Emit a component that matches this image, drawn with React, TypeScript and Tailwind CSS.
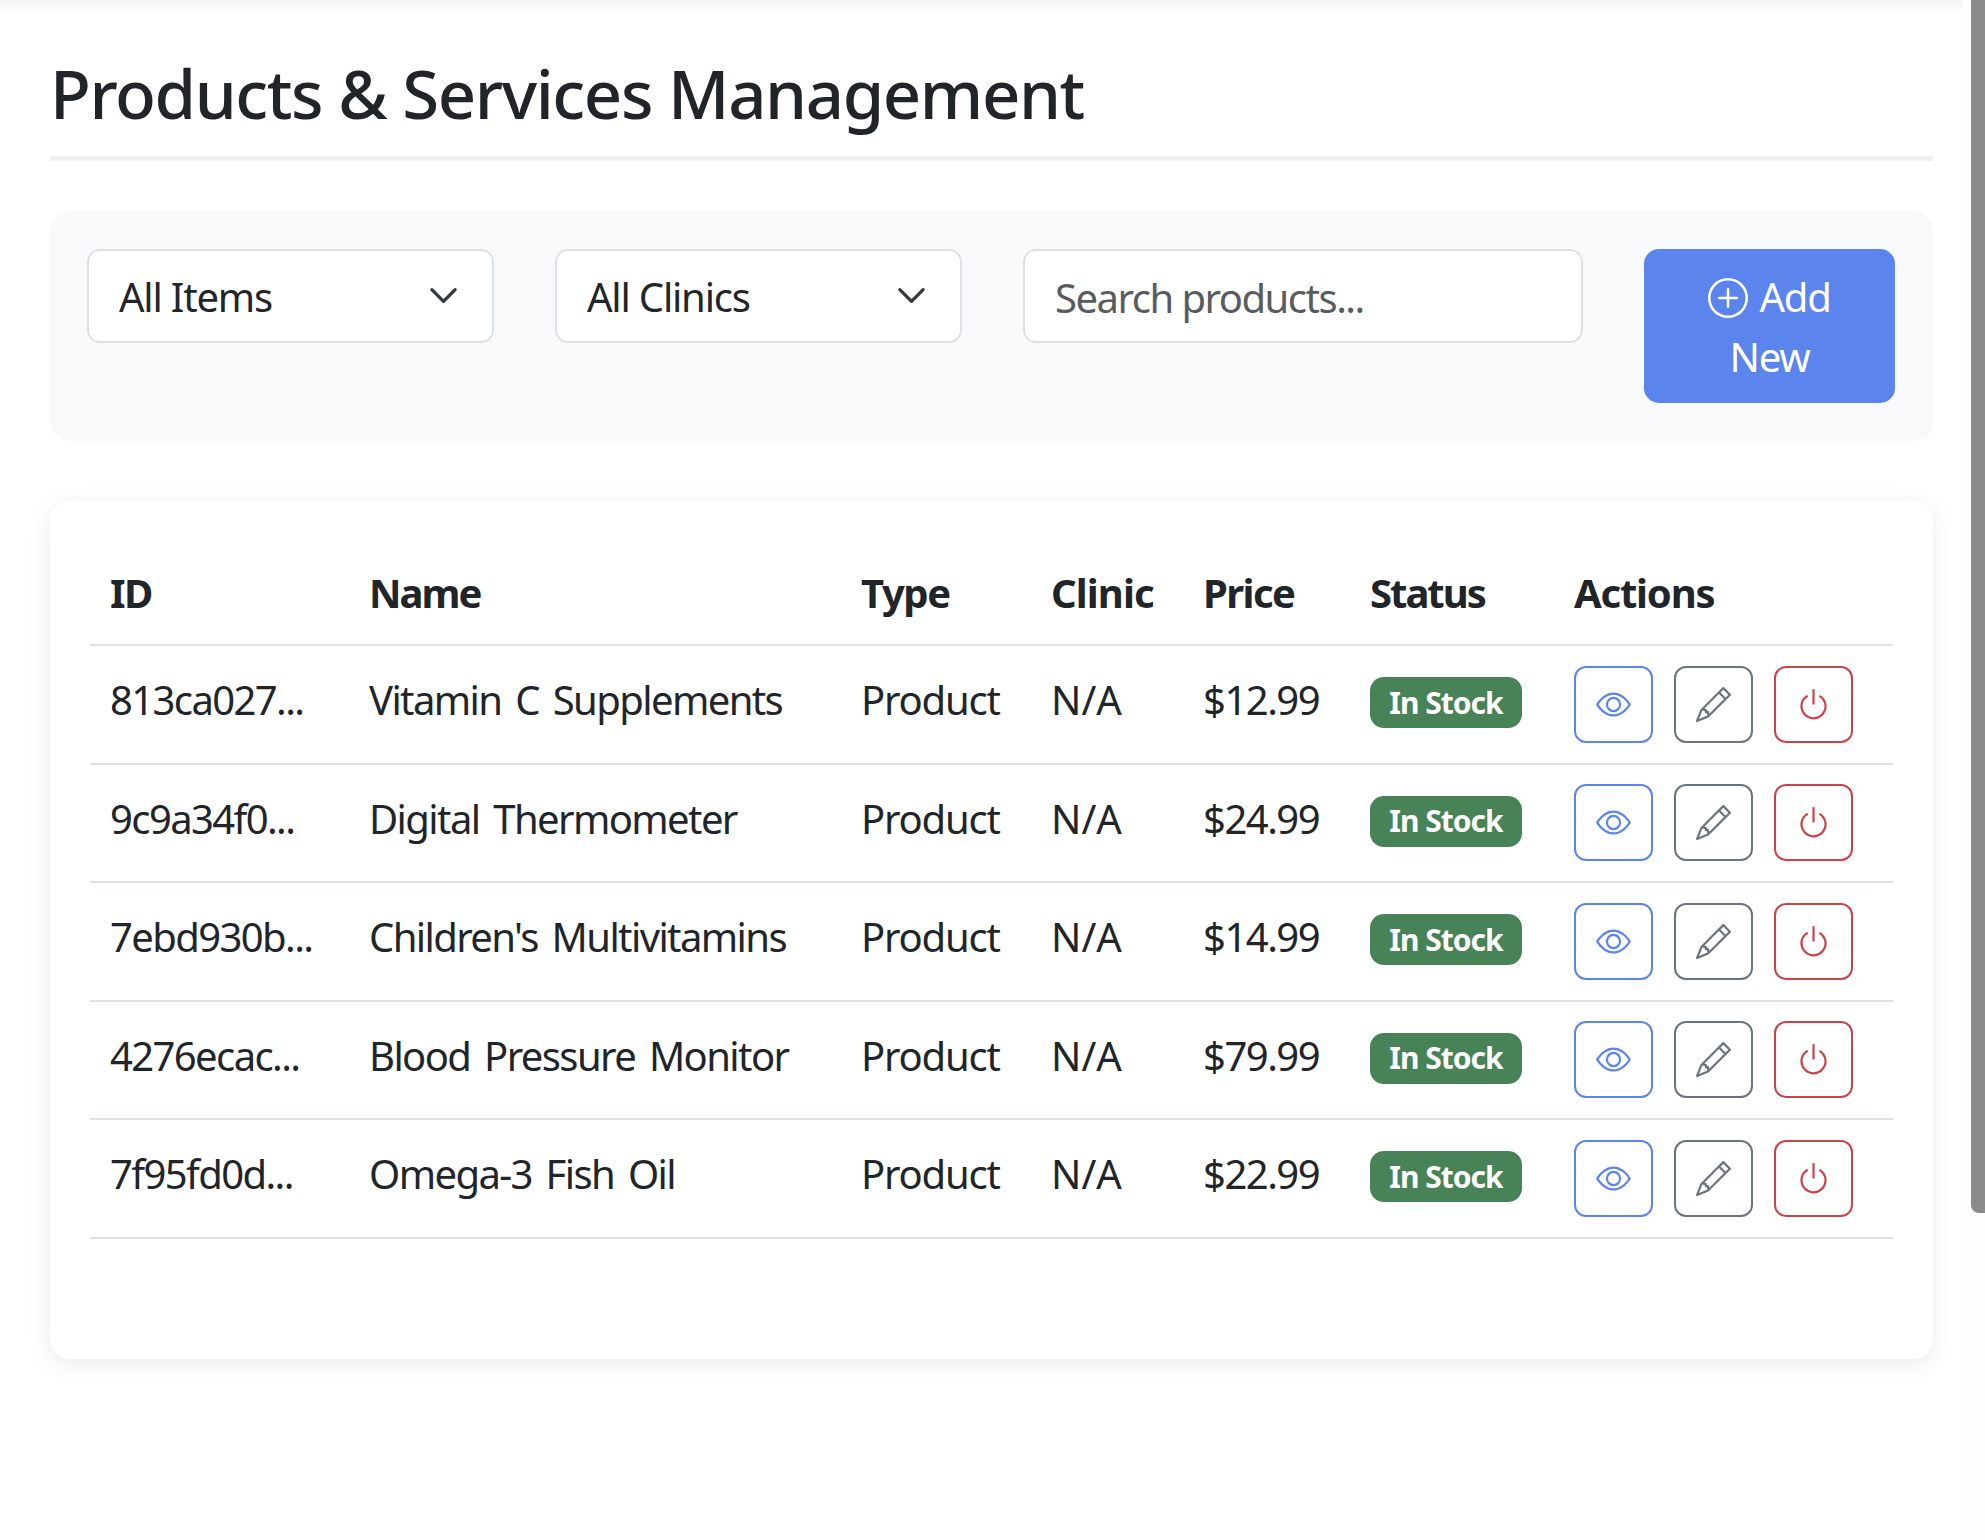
import { BsEye, BsPencil, BsPower, BsPlusCircle } from "react-icons/bs";

const rows = [
  ["813ca027...", "Vitamin C Supplements", "$12.99"],
  ["9c9a34f0...", "Digital Thermometer", "$24.99"],
  ["7ebd930b...", "Children's Multivitamins", "$14.99"],
  ["4276ecac...", "Blood Pressure Monitor", "$79.99"],
  ["7f95fd0d...", "Omega-3 Fish Oil", "$22.99"],
];

const headers = [
  ["ID", "tracking-[-1.6px]"],
  ["Name", "tracking-[-2px]"],
  ["Type", "tracking-[-1.4px]"],
  ["Clinic", "tracking-[-0.9px]"],
  ["Price", "tracking-[-1.6px]"],
  ["Status", "tracking-[-2px]"],
  ["Actions", "tracking-[-1.2px]"],
];

function Select({ label }: { label: string }) {
  return (
    <div className="w-[407px] h-[94px] flex items-center justify-between rounded-[13px] border-2 border-[#dee2e6] bg-white pl-[30px] pr-[33px]">
      <span className="pt-[2px]">{label}</span>
      <svg viewBox="0 0 16 16" className="w-[31px] h-[31px] -mt-[2px]" fill="none" stroke="#343a40" strokeWidth="1.7" strokeLinecap="round" strokeLinejoin="round">
        <path d="m2 5 6 6 6-6" />
      </svg>
    </div>
  );
}

export default function App() {
  return (
    <div className="relative h-[1540px] w-[1985px] overflow-hidden bg-white text-[40px] leading-[60px] text-[#212529] font-['Noto_Sans',sans-serif] tracking-[-1.2px]">
      <div className="absolute left-0 top-0 h-[14px] w-full bg-gradient-to-b from-[#f4f4f4] to-white" />
      <div className="absolute right-0 top-0 h-full w-[22px] bg-[#fdfdfd]" />
      <div className="absolute right-0 top-0 h-[1213px] w-[14px] rounded-bl-[8px] bg-[#8b8b8b]" />

      <div className="relative w-[1883px] ml-[50px] pt-[50px]">
        <h1 className="h-[111px] border-b-[5px] border-[#f0f0f0] text-[67px] leading-[87px] font-medium tracking-[-1.4px]">
          Products &amp; Services Management
        </h1>

        <div className="mt-[50px] h-[230px] rounded-[20px] bg-[#f8f9fa] px-[37px] pt-[38px] flex items-start gap-[61px]">
          <Select label="All Items" />
          <Select label="All Clinics" />
          <input
            readOnly
            placeholder="Search products..."
            className="w-[560px] h-[94px] rounded-[13px] border-2 border-[#dee2e6] bg-white px-[30px] pt-[2px] outline-none tracking-[-1.5px] placeholder:text-[#595c5f]"
          />
          <button className="w-[251px] h-[154px] rounded-[15px] bg-[#5b84ec] pt-[2px] text-white text-center">
            <BsPlusCircle className="inline-block w-[40px] h-[40px] mr-[11px] align-[-6px]" />
            Add
            <br />
            New
          </button>
        </div>

        <div className="mt-[60px] h-[858px] rounded-[20px] bg-white shadow-[0_5px_25px_rgba(0,0,0,0.08)] px-[40px] pt-[39px]">
          <table className="w-[1803px] table-fixed border-collapse">
            <colgroup>
              <col className="w-[259px]" />
              <col className="w-[492px]" />
              <col className="w-[190px]" />
              <col className="w-[152px]" />
              <col className="w-[167px]" />
              <col className="w-[204px]" />
              <col className="w-[339px]" />
            </colgroup>
            <thead>
              <tr className="h-[105px] border-b-2 border-[#dee2e6] text-left">
                {headers.map(([h, t]) => (
                  <th key={h} className={`px-[20px] pt-[2px] font-bold ${t}`}>{h}</th>
                ))}
              </tr>
            </thead>
            <tbody>
              {rows.map((r) => (
                <tr key={r[0]} className="h-[118.5px] border-b-2 border-[#dee2e6]">
                  <td className="px-[20px] pt-[24px] align-top whitespace-nowrap tracking-[-1.6px]">{r[0]}</td>
                  <td className="px-[20px] pt-[24px] align-top whitespace-nowrap tracking-[-1.6px] [word-spacing:5px]">{r[1]}</td>
                  <td className="px-[20px] pt-[24px] align-top">Product</td>
                  <td className="px-[20px] pt-[24px] align-top tracking-[0px]">N/A</td>
                  <td className="px-[20px] pt-[24px] align-top tracking-[-1.5px]">{r[2]}</td>
                  <td className="px-[20px] pt-[31px] align-top">
                    <span className="flex h-[51px] w-[152px] items-center justify-center rounded-[14px] bg-[#488257] text-[30px] font-bold text-white tracking-[-1px]">In Stock</span>
                  </td>
                  <td className="px-[20px]">
                    <div className="flex gap-[21px]">
                      <button className="flex h-[77px] w-[79px] items-center justify-center rounded-[12px] border-2 border-[#5b84ec] text-[#5b84ec]"><BsEye className="h-[35px] w-[35px]" /></button>
                      <button className="flex h-[77px] w-[79px] items-center justify-center rounded-[12px] border-2 border-[#6c757d] text-[#6c757d]"><BsPencil className="h-[35px] w-[35px]" /></button>
                      <button className="flex h-[77px] w-[79px] items-center justify-center rounded-[12px] border-2 border-[#c8444b] text-[#c8444b]"><BsPower className="h-[35px] w-[35px]" /></button>
                    </div>
                  </td>
                </tr>
              ))}
            </tbody>
          </table>
        </div>
      </div>
    </div>
  );
}
